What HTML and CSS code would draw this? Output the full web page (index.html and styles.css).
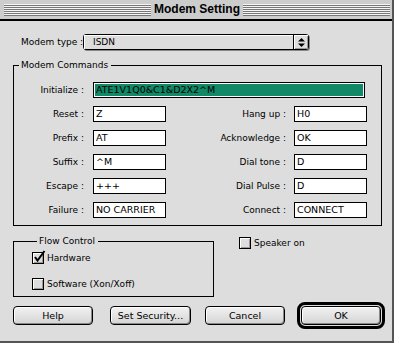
FILE: index.html
```html
<!DOCTYPE html>
<html lang="en">
<head>
    <meta charset="UTF-8">
    <title>Modem Setting</title>
    <link rel="stylesheet" href="styles.css">
</head>
<body>
    <div id="window">
        <!-- Title Bar -->
        <div id="titlebar">
            <div class="stripes"></div>
            <div id="title">Modem Setting</div>
            <div class="stripes"></div>
        </div>

        <!-- Dialog Body -->
        <div id="content">
            <div id="type-row">
                <span class="type-label">Modem type :</span>
                <div class="popup">
                    <span class="popup-value">ISDN</span>
                    <span class="popup-arrows">
                        <svg width="7" height="9" viewBox="0 0 7 9">
                            <path d="M3.5 0 L7 3.5 L0 3.5 Z M0 5.5 L7 5.5 L3.5 9 Z" fill="#000"/>
                        </svg>
                    </span>
                </div>
            </div>

            <fieldset class="group" id="commands">
                <legend>Modem Commands</legend>
                <div class="cmd-grid">
                    <label class="lbl">Initialize :</label>
                    <div class="field wide selected">ATE1V1Q0&amp;C1&amp;D2X2^M</div>

                    <label class="lbl">Reset :</label>
                    <div class="field">Z</div>
                    <label class="lbl right">Hang up :</label>
                    <div class="field">H0</div>

                    <label class="lbl">Prefix :</label>
                    <div class="field">AT</div>
                    <label class="lbl right">Acknowledge :</label>
                    <div class="field">OK</div>

                    <label class="lbl">Suffix :</label>
                    <div class="field">^M</div>
                    <label class="lbl right">Dial tone :</label>
                    <div class="field">D</div>

                    <label class="lbl">Escape :</label>
                    <div class="field">+++</div>
                    <label class="lbl right">Dial Pulse :</label>
                    <div class="field">D</div>

                    <label class="lbl">Failure :</label>
                    <div class="field">NO CARRIER</div>
                    <label class="lbl right">Connect :</label>
                    <div class="field">CONNECT</div>
                </div>
            </fieldset>

            <div id="lower">
                <fieldset class="group" id="flow">
                    <legend>Flow Control</legend>
                    <div class="check-row">
                        <span class="checkbox">
                            <svg class="tick" width="14" height="14" viewBox="0 0 14 14">
                                <path d="M3 7 L5.5 10.5 L12.5 1" fill="none" stroke="#000" stroke-width="2"/>
                            </svg>
                        </span>
                        <span>Hardware</span>
                    </div>
                    <div class="check-row">
                        <span class="checkbox"></span>
                        <span>Software (Xon/Xoff)</span>
                    </div>
                </fieldset>
                <div class="check-row" id="speaker">
                    <span class="checkbox"></span>
                    <span>Speaker on</span>
                </div>
            </div>

            <div id="buttons">
                <button class="btn" id="help">Help</button>
                <button class="btn" id="security">Set Security...</button>
                <button class="btn" id="cancel">Cancel</button>
                <div class="default-ring">
                    <button class="btn">OK</button>
                </div>
            </div>
        </div>
    </div>
</body>
</html>
```

FILE: styles.css
```css
/* Global Styles */
body {
    margin: 0;
    font-family: "DejaVu Sans", Verdana, sans-serif;
    font-size: 9px;
    color: #000000;
    background-color: #dddddd;
}

/* Window */
#window {
    width: 394px;
    height: 343px;
    box-sizing: border-box;
    border-right: 2px solid #555555;
    border-bottom: 2px solid #555555;
    background-color: #dddddd;
}

/* Title Bar */
#titlebar {
    height: 19px;
    display: flex;
    align-items: center;
    padding: 0 2px 0 4px;
    background-color: #cccccc;
    border-bottom: 2px solid #000000;
}

.stripes {
    flex: 1;
    height: 12px;
    background: repeating-linear-gradient(#f4f4f4 0 1px, #777777 1px 2px);
}

#title {
    margin: 0 3px;
    font-family: "Liberation Sans", Arial, sans-serif;
    font-weight: bold;
    font-size: 12px;
    line-height: 19px;
}

/* Content */
#content {
    padding: 0 0 0 13px;
    border-left: 1px solid #ffffff;
    margin-left: -1px;
}

#type-row {
    display: flex;
    align-items: center;
    margin-top: 13px;
    padding-left: 8px;
}

.type-label {
    width: 62px;
    flex-shrink: 0;
    white-space: nowrap;
}

.popup {
    display: flex;
    width: 226px;
    height: 16px;
    box-sizing: border-box;
    border: 1px solid #000000;
    border-radius: 3px;
    box-shadow: 1px 1px 0 #888888;
    background-color: #dddddd;
}

.popup-value {
    flex: 1;
    padding-left: 9px;
    line-height: 14px;
    box-shadow: inset 1px 1px 0 #ffffff;
}

.popup-arrows {
    width: 14px;
    border-left: 1px solid #000000;
    display: flex;
    justify-content: center;
    align-items: center;
    box-shadow: inset 1px 1px 0 #ffffff, inset -1px -1px 0 #999999;
}

/* Group Boxes */
.group {
    margin: 9px 0 0 0;
    border: 1px solid #000000;
    box-sizing: border-box;
}

.group legend {
    margin-left: 5px;
    padding: 0 3px 0 2px;
    line-height: 12px;
}

#commands {
    width: 369px;
    padding: 11px 0 7px 0;
}

.cmd-grid {
    display: grid;
    grid-template-columns: 79px 73px 128px 73px;
    grid-auto-rows: 16px;
    row-gap: 8px;
    align-items: center;
}

.lbl {
    text-align: right;
    padding-right: 9px;
    white-space: nowrap;
}

.lbl.right {
    padding-right: 8px;
}

.field {
    height: 16px;
    box-sizing: border-box;
    border: 1px solid #000000;
    background-color: #ffffff;
    padding-left: 2px;
    line-height: 14px;
    font-size: 9.5px;
    white-space: nowrap;
    overflow: hidden;
}

.field.wide {
    grid-column: 2 / 5;
    width: 272px;
}

.field.selected {
    background-color: #118866;
    box-shadow: inset 0 0 0 1px #ffffff;
}

/* Lower Area */
#lower {
    display: flex;
    align-items: flex-start;
}

#flow {
    width: 201px;
    padding: 4px 0 5px 18px;
}

.check-row {
    display: flex;
    align-items: center;
    height: 14px;
    white-space: nowrap;
}

#flow .check-row + .check-row {
    margin-top: 12px;
}

#speaker {
    margin: 10px 0 0 25px;
}

.checkbox {
    position: relative;
    width: 12px;
    height: 12px;
    box-sizing: border-box;
    margin-right: 3px;
    border: 1px solid #000000;
    background-color: #dddddd;
    box-shadow: inset 1px 1px 0 #ffffff, inset -1px -1px 0 #999999;
}

.tick {
    position: absolute;
    left: -1px;
    top: -3px;
}

/* Buttons */
#buttons {
    display: flex;
    align-items: center;
    margin-top: 5px;
}

.btn {
    width: 80px;
    height: 19px;
    padding: 0;
    border: 1px solid #000000;
    border-radius: 4px;
    background: linear-gradient(#f2f2f2, #d4d4d4);
    box-shadow: inset 1px 1px 0 #ffffff, inset -1px -1px 0 #888888;
    font-family: "DejaVu Sans", Verdana, sans-serif;
    font-size: 9.5px;
    color: #000000;
}

#security {
    width: 81px;
    margin-left: 17px;
}

#cancel {
    margin-left: 14px;
}

.default-ring {
    margin-left: 12px;
    padding: 1px;
    border: 3px solid #000000;
    border-radius: 8px;
    display: flex;
}
```
